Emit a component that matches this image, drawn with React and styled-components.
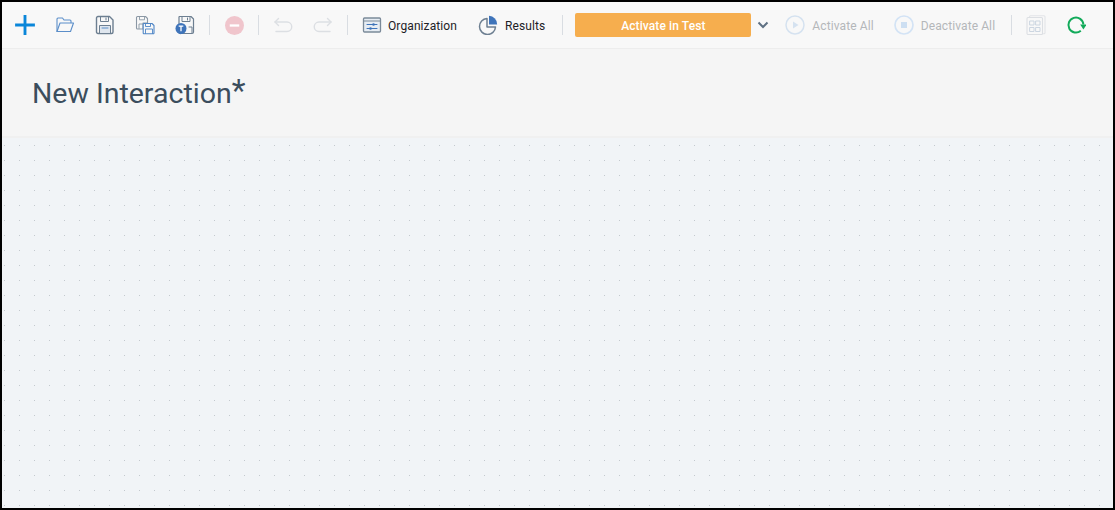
import styled, { createGlobalStyle } from "styled-components";

const GlobalStyle = createGlobalStyle`
  html, body {
    margin: 0;
    padding: 0;
    background: #000;
    font-family: Roboto, "Liberation Sans", sans-serif;
  }
`;

const Frame = styled.div`
  width: 1115px;
  height: 510px;
  box-sizing: border-box;
  border: 2px solid #000;
  display: flex;
  flex-direction: column;
  overflow: hidden;
`;

const Toolbar = styled.div`
  height: 46px;
  flex: none;
  display: flex;
  align-items: center;
  padding-left: 3px;
  background: #f8f8f8;
  border-bottom: 1px solid #ededed;
`;

const IconButton = styled.div`
  width: 40px;
  height: 30px;
  flex: none;
  display: flex;
  align-items: center;
  justify-content: center;
`;

const Separator = styled.div`
  width: 1px;
  height: 20px;
  flex: none;
  margin: 0 4px;
  background: #d9dde2;
`;

const LabelButton = styled.div`
  display: flex;
  align-items: center;
  flex: none;
  gap: ${(p) => p.$gap}px;
  padding: 0 ${(p) => p.$right}px 0 ${(p) => p.$left}px;
  font-size: 12px;
  letter-spacing: 0.1px;
  color: ${(p) => (p.$disabled ? "#b4b7ba" : "#1d2126")};
  white-space: nowrap;
`;

const Label = styled.span`
  padding-top: 2px;
`;

const ActivateButton = styled.div`
  width: 176px;
  height: 24px;
  box-sizing: border-box;
  flex: none;
  margin-left: 8px;
  padding-top: 1px;
  border-radius: 2px;
  background: #f6ae4e;
  color: #fff;
  font-size: 12px;
  font-weight: 500;
  letter-spacing: 0.1px;
  display: flex;
  align-items: center;
  justify-content: center;
`;

const Chevron = styled.div`
  width: 24px;
  flex: none;
  display: flex;
  justify-content: center;
`;

const Header = styled.div`
  height: 89px;
  flex: none;
  box-sizing: border-box;
  display: flex;
  align-items: center;
  padding: 2px 0 0 30px;
  background: #f5f5f5;
  border-bottom: 2px solid #f0f0f0;
`;

const Title = styled.h1`
  margin: 0;
  font-size: 28.5px;
  font-weight: 400;
  color: #3b4d5d;
`;

const Asterisk = styled.span`
  font-size: 32px;
  line-height: 0;
  vertical-align: 2px;
`;

const Canvas = styled.div`
  flex: 1;
  background-color: #f1f4f7;
  background-image: radial-gradient(circle at center, #c3c9ce 0.6px, transparent 0.9px);
  background-size: 15px 15px;
  background-position: -5px 0px;
`;

const Svg = ({ size = 20, children }) => (
  <svg width={size} height={size} viewBox="0 0 20 20" fill="none" strokeLinecap="round" strokeLinejoin="round">
    {children}
  </svg>
);

const PlusIcon = () => (
  <Svg size={22}>
    <path d="M10 1v18M1 10h18" stroke="#0a86d9" strokeWidth="2.6" strokeLinecap="butt" />
  </Svg>
);

const FolderIcon = () => (
  <Svg>
    <path d="M2 16.5V4a1 1 0 0 1 1-1h4.5l1.5 2h6a1 1 0 0 1 1 1v1.500" stroke="#5b8ec9" strokeWidth="1.1" />
    <path d="M2 16.5L5 8h13.5l-3 8.5z" stroke="#5b8ec9" strokeWidth="1.1" />
  </Svg>
);

const SaveIcon = () => (
  <Svg>
    <path d="M3 1.500h11.500l3.500 3.500v12a1.500 1.500 0 0 1-1.500 1.500H3A1.500 1.500 0 0 1 1.500 17V3A1.500 1.500 0 0 1 3 1.500z" stroke="#6d7f91" strokeWidth="1.400" />
    <path d="M5.500 1.800v4.700h8V1.800M11 3v2" stroke="#6d7f91" strokeWidth="1" />
    <path d="M4.500 18v-7.500h11V18" stroke="#6d7f91" strokeWidth="1" fill="#dfe6ee" />
    <path d="M7 13h6" stroke="#5b8ec9" strokeWidth="1" />
  </Svg>
);

const SaveAsIcon = () => (
  <Svg>
    <path d="M2.500 1.500h8l2 2V8H8v6H2.500A1 1 0 0 1 1.500 13V2.500a1 1 0 0 1 1-1z" stroke="#8b98a5" strokeWidth="1.100" />
    <path d="M4.500 1.800v3h5v-3M4 13.500V9h3.500" stroke="#8b98a5" strokeWidth="0.900" />
    <path d="M9 8.500h8l2 2V18a.8.8 0 0 1-.8.8H9a.8.8 0 0 1-.8-.8V9.300A.8.8 0 0 1 9 8.500z" stroke="#4f86c6" strokeWidth="1.100" fill="#f8f8f8" />
    <path d="M10.500 8.800v2.700h5V8.800M10.500 18.500V14h7v4.500" stroke="#4f86c6" strokeWidth="0.900" />
  </Svg>
);

const SaveTestIcon = () => (
  <Svg>
    <path d="M4.500 1.500h11.500l2.500 2.500V17a1.500 1.500 0 0 1-1.500 1.500H6A1.500 1.500 0 0 1 4 17V2z" stroke="#6d7f91" strokeWidth="1.200" />
    <path d="M7 1.800v4.700h8V1.800M12.500 3v2M14 12h3v6" stroke="#6d7f91" strokeWidth="1" />
    <circle cx="6" cy="13.500" r="5.500" fill="#3f74ba" />
    <path d="M3.700 11.200h4.600M6 11.200v5" stroke="#fff" strokeWidth="1.300" strokeLinecap="butt" />
  </Svg>
);

const MinusIcon = () => (
  <Svg size={19}>
    <circle cx="10" cy="10" r="10" fill="#f0c5cc" />
    <path d="M5 10h10" stroke="#fff" strokeWidth="2.400" strokeLinecap="butt" />
  </Svg>
);

const UndoIcon = ({ flip }) => (
  <svg width="20" height="20" viewBox="0 0 20 20" fill="none" strokeLinecap="round" strokeLinejoin="round" transform={flip ? "scale(-1 1)" : undefined}>
    <path d="M2 7h12a4.500 4.500 0 0 1 0 9.500H3" stroke="#dcdfe3" strokeWidth="1.400" />
    <path d="M5.500 3.500L2 7l3.500 3.500" stroke="#dcdfe3" strokeWidth="1.400" />
  </svg>
);

const OrganizationIcon = () => (
  <Svg>
    <rect x="1.500" y="3" width="17" height="14" rx="1" stroke="#7b8a99" strokeWidth="1.300" fill="#e6ecf3" />
    <path d="M1.500 6h17" stroke="#7b8a99" strokeWidth="1" />
    <path d="M5 9.500h10M5 13.500h10" stroke="#3f74ba" strokeWidth="1" />
    <circle cx="11.500" cy="9.500" r="1.300" fill="#3f74ba" />
    <circle cx="8.500" cy="13.500" r="1.300" fill="#3f74ba" />
  </Svg>
);

const ResultsIcon = () => (
  <Svg>
    <path d="M9 3.500a8 8 0 1 0 8.500 8.500H9z" stroke="#6d7f91" strokeWidth="1.500" />
    <path d="M11 0.800a8.500 8.500 0 0 1 8.200 8.700H11z" fill="#3f74ba" />
  </Svg>
);

const ChevronIcon = () => (
  <svg width="12" height="8" viewBox="0 0 12 8" fill="none">
    <path d="M1.500 1.500L6 6l4.500-4.500" stroke="#5f7183" strokeWidth="2" />
  </svg>
);

const PlayIcon = () => (
  <Svg>
    <circle cx="10" cy="10" r="9" stroke="#d5e2f0" strokeWidth="1.500" />
    <path d="M8 6.500l5.500 3.500L8 13.500z" fill="#d5e2f0" />
  </Svg>
);

const StopIcon = () => (
  <Svg>
    <circle cx="10" cy="10" r="9" stroke="#d3e3f5" strokeWidth="1.700" />
    <rect x="7" y="7" width="6" height="6" fill="#cddff2" />
  </Svg>
);

const GridIcon = () => (
  <Svg>
    <rect x="3.500" y="0.800" width="15.500" height="18" rx="1" stroke="#e2e4e7" strokeWidth="1.100" />
    <rect x="1" y="2.500" width="15.500" height="17" rx="1" stroke="#dcdfe3" strokeWidth="1.100" fill="#f8f8f8" />
    <rect x="4" y="6" width="4" height="4" stroke="#ccd6e1" strokeWidth="1" />
    <rect x="10" y="6" width="4" height="4" stroke="#ccd6e1" strokeWidth="1" />
    <rect x="4" y="12.500" width="4" height="4" stroke="#ccd6e1" strokeWidth="1" />
    <rect x="10" y="12.500" width="4" height="4" stroke="#ccd6e1" strokeWidth="1" />
  </Svg>
);

const RefreshIcon = () => (
  <Svg>
    <path d="M14.800 15.800A7.500 7.500 0 1 1 17.400 9.500" stroke="#12aa5a" strokeWidth="2" strokeLinecap="butt" />
    <path d="M14.200 9.500h6.400l-3.200 5z" fill="#12aa5a" />
  </Svg>
);

export default function App() {
  return (
    <>
      <GlobalStyle />
      <Frame>
        <Toolbar>
          <IconButton><PlusIcon /></IconButton>
          <IconButton><FolderIcon /></IconButton>
          <IconButton><SaveIcon /></IconButton>
          <IconButton><SaveAsIcon /></IconButton>
          <IconButton><SaveTestIcon /></IconButton>
          <Separator />
          <IconButton><MinusIcon /></IconButton>
          <Separator />
          <IconButton><UndoIcon /></IconButton>
          <IconButton><UndoIcon flip /></IconButton>
          <Separator />
          <LabelButton $left={10} $right={10} $gap={6}><OrganizationIcon /><Label>Organization</Label></LabelButton>
          <LabelButton $left={11} $right={13} $gap={7}><ResultsIcon /><Label>Results</Label></LabelButton>
          <Separator />
          <ActivateButton>Activate in Test</ActivateButton>
          <Chevron><ChevronIcon /></Chevron>
          <LabelButton $disabled $left={10} $right={10} $gap={7}><PlayIcon /><Label>Activate All</Label></LabelButton>
          <LabelButton $disabled $left={10} $right={12} $gap={7}><StopIcon /><Label>Deactivate All</Label></LabelButton>
          <Separator />
          <IconButton><GridIcon /></IconButton>
          <IconButton><RefreshIcon /></IconButton>
        </Toolbar>
        <Header>
          <Title>New Interaction<Asterisk>*</Asterisk></Title>
        </Header>
        <Canvas />
      </Frame>
    </>
  );
}
